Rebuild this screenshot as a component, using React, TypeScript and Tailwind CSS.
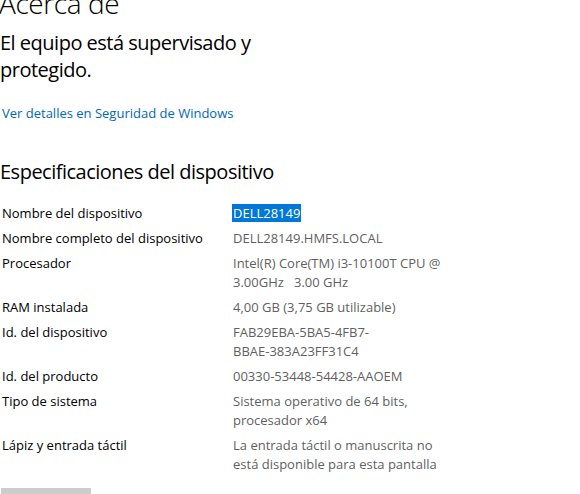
import React from "react";

const rows: { label: string; value: React.ReactNode; selected?: boolean }[] = [
  { label: "Nombre del dispositivo", value: "DELL28149", selected: true },
  { label: "Nombre completo del dispositivo", value: "DELL28149.HMFS.LOCAL" },
  {
    label: "Procesador",
    value: (
      <>
        Intel(R) Core(TM) i3-10100T CPU @<br />
        3.00GHz&nbsp;&nbsp;&nbsp;3.00 GHz
      </>
    ),
  },
  { label: "RAM instalada", value: "4,00 GB (3,75 GB utilizable)" },
  {
    label: "Id. del dispositivo",
    value: (
      <>
        FAB29EBA-5BA5-4FB7-
        <br />
        BBAE-383A23FF31C4
      </>
    ),
  },
  { label: "Id. del producto", value: "00330-53448-54428-AAOEM" },
  {
    label: "Tipo de sistema",
    value: (
      <>
        Sistema operativo de 64 bits,
        <br />
        procesador x64
      </>
    ),
  },
  {
    label: "Lápiz y entrada táctil",
    value: (
      <>
        La entrada táctil o manuscrita no
        <br />
        está disponible para esta pantalla
      </>
    ),
  },
];

export default function App() {
  return (
    <div
      className="w-[580px] h-[494px] overflow-hidden bg-white text-black"
      style={{ fontFamily: '"Segoe UI", "Open Sans", "Noto Sans", sans-serif' }}
    >
      <h1 className="text-[28px] leading-[38px] font-light tracking-[-0.4px] mt-[-16px] ml-[-1px]">Acerca de</h1>
      <p className="mt-[7px] text-[20px] leading-[27px] tracking-[-0.5px]">
        El equipo está supervisado y
        <br />
        protegido.
      </p>
      <a className="block mt-[21px] ml-[2px] text-[13px] leading-[19px] text-[#0067b8]">
        Ver detalles en Seguridad de Windows
      </a>
      <h2 className="mt-[35px] text-[20px] leading-[27px] tracking-[-0.5px]">
        Especificaciones del dispositivo
      </h2>
      <div className="mt-[19px] flex flex-col gap-[6px] text-[13px] leading-[19px]">
        {rows.map((r) => (
          <div key={r.label} className="flex">
            <div className="w-[233px] pl-[2px] shrink-0">{r.label}</div>
            <div className="text-[#5f5f5f]">
              {r.selected ? (
                <span className="bg-[#0078d7] text-white px-[1px] ml-[-1px]">{r.value}</span>
              ) : (
                r.value
              )}
            </div>
          </div>
        ))}
      </div>
      <div className="mt-[14px] ml-[1px] w-[90px] h-[32px] bg-[#cccccc]" />
    </div>
  );
}
